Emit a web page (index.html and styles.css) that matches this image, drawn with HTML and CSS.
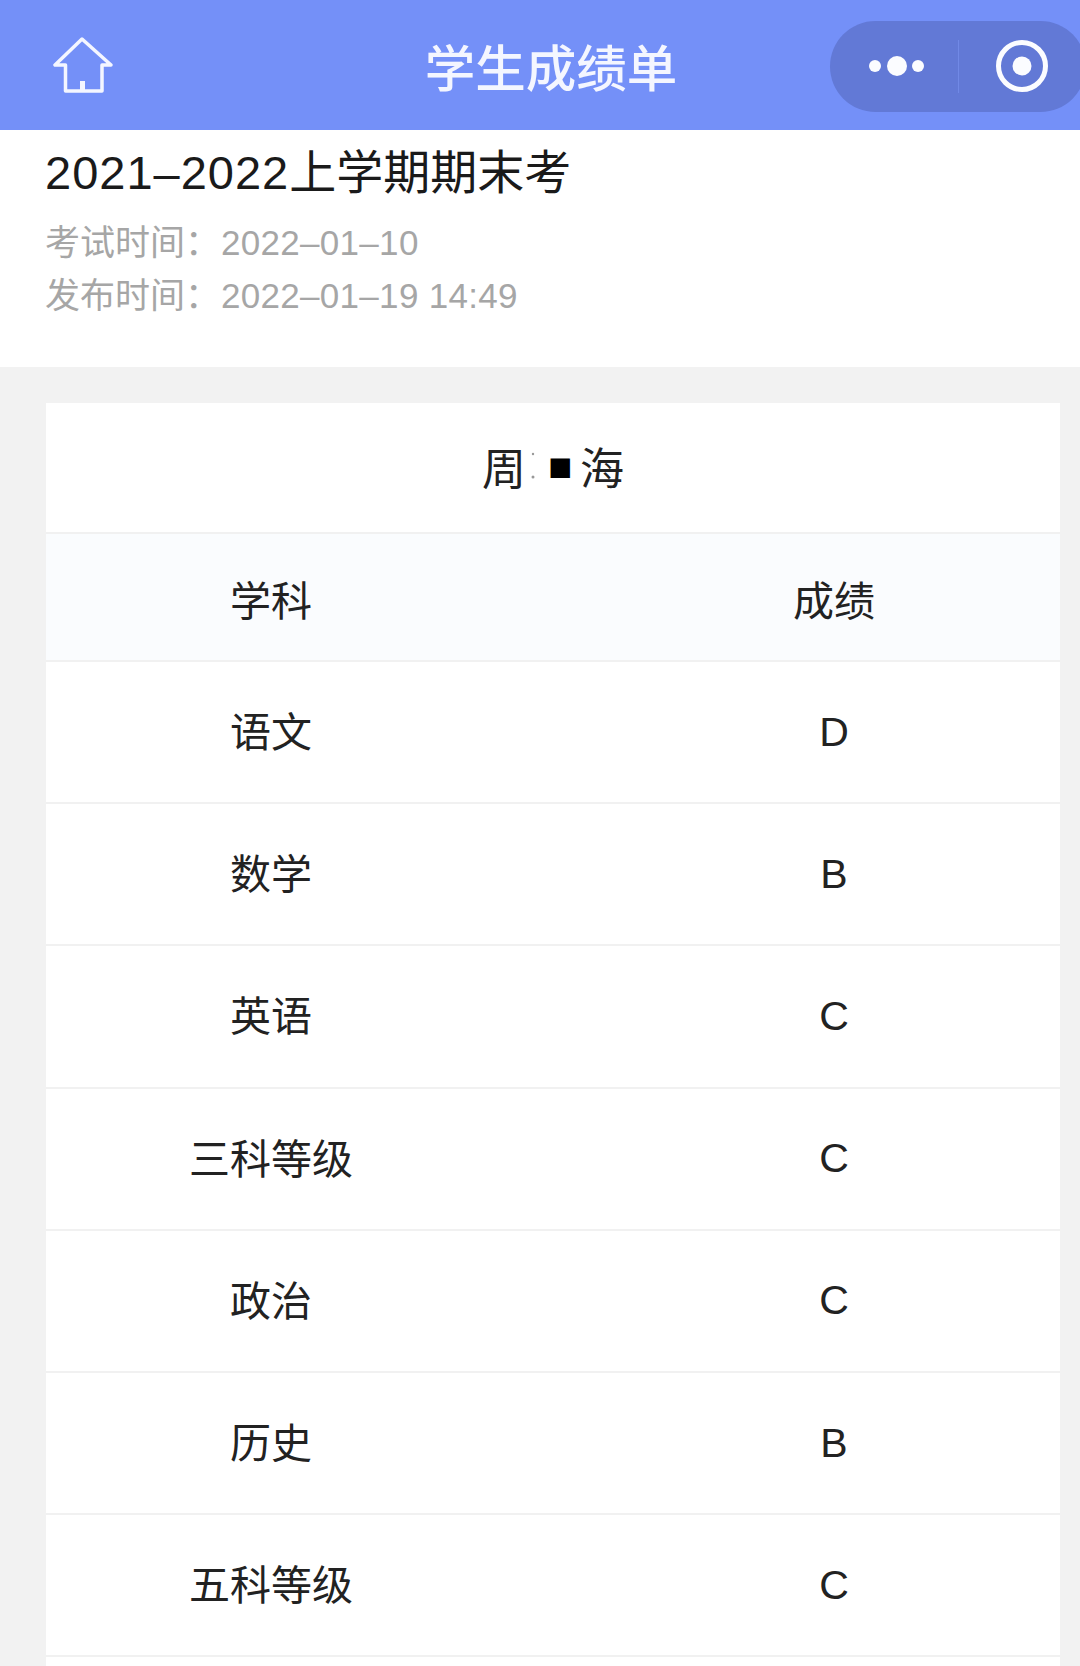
FILE: index.html
```html
<!DOCTYPE html>
<html lang="zh-CN">
<head>
<meta charset="utf-8">
<title>学生成绩单</title>
<link rel="stylesheet" href="styles.css">
</head>
<body>
<header class="nav">
  <svg class="home" viewBox="0 0 60 56" width="60" height="56" aria-hidden="true">
    <path class="home-line" d="M29 2 L2 28 H12.500 V54 H49 V28 H58 Z"/>
    <rect class="home-door" x="27" y="44" width="5" height="10"/>
  </svg>
  <h1 class="nav-title">学生成绩单</h1>
  <div class="capsule">
    <svg class="capsule-dots" viewBox="0 0 56 20" width="56" height="20" aria-hidden="true">
      <circle cx="6" cy="10" r="6"/><circle cx="28" cy="10" r="10"/><circle cx="49" cy="10" r="6"/>
    </svg>
    <span class="capsule-divider"></span>
    <svg class="capsule-record" viewBox="0 0 52 52" width="52" height="52" aria-hidden="true">
      <circle class="record-ring" cx="26" cy="26" r="23.500"/><circle class="record-dot" cx="26" cy="26" r="9.500"/>
    </svg>
  </div>
</header>
<section class="exam">
  <h2 class="exam-title"><span class="exam-year">2021–2022</span>上学期期末考</h2>
  <p class="exam-meta"><span class="meta-label">考试时间：</span><span class="meta-value">2022–01–10</span></p>
  <p class="exam-meta"><span class="meta-label">发布时间：</span><span class="meta-value">2022–01–19 14:49</span></p>
</section>
<main class="card">
  <div class="student">
    <span class="student-char">周</span>
    <svg class="mask-dots" viewBox="0 0 14 30" width="14" height="30" aria-hidden="true">
      <circle cx="7" cy="3" r="1.200"/><circle cx="7" cy="26" r="1.500"/>
    </svg>
    <span class="mask">■</span>
    <span class="student-char">海</span>
  </div>
  <div class="row row-head"><span>学科</span><span>成绩</span></div>
  <div class="row"><span>语文</span><span>D</span></div>
  <div class="row"><span>数学</span><span>B</span></div>
  <div class="row"><span>英语</span><span>C</span></div>
  <div class="row"><span>三科等级</span><span>C</span></div>
  <div class="row"><span>政治</span><span>C</span></div>
  <div class="row"><span>历史</span><span>B</span></div>
  <div class="row"><span>五科等级</span><span>C</span></div>
</main>
</body>
</html>
```
FILE: styles.css
```css
* { box-sizing: border-box; }
html, body { margin: 0; height: 1666px; overflow: hidden; }
body {
  background: #f2f2f2;
  color: #222;
  font-family: "Liberation Sans", "Noto Sans CJK SC", sans-serif;
}
.nav {
  height: 130px;
  padding-left: 22px;
  background: #7490f8;
  display: grid;
  grid-template-columns: 1fr auto 1fr;
  align-items: center;
  color: #fff;
}
.home { margin-left: 31px; }
.home-line { fill: none; stroke: #f4f6ff; stroke-width: 3.5; stroke-linejoin: round; }
.home-door { fill: #f4f6ff; }
.nav-title { margin: 10px 0 0; font-size: 50.500px; font-weight: 500; line-height: 60px; color: #f4f6ff; }
.capsule {
  justify-self: end;
  margin-right: -6px;
  margin-top: 2px;
  width: 256px;
  height: 91px;
  border-radius: 46px;
  background: #6279d6;
  display: flex;
  align-items: center;
  padding-left: 39px;
}
.capsule-dots { fill: #fbfcff; }
.capsule-divider { width: 1px; height: 53px; margin: 0 37px 0 33px; background: #7189e6; }
.record-ring { fill: none; stroke: #fbfcff; stroke-width: 5; }
.record-dot { fill: #fbfcff; }
.exam { height: 237px; padding: 13px 45px 0; background: #fff; }
.exam-title { margin: 0 0 13px; font-size: 47px; font-weight: 400; line-height: 60px; color: #1a1a1a; }
.exam-year { letter-spacing: 1px; }
.exam-meta { margin: 0; font-size: 35px; line-height: 53px; color: #a6a6a6; }
.meta-label { display: inline-block; width: 176px; }
.meta-value { letter-spacing: 0.300px; }
.card { width: 1014px; height: 1263px; overflow: hidden; margin: 36px 0 0 46px; background: #fff; }
.student {
  height: 131px;
  padding-bottom: 4px;
  display: flex;
  align-items: center;
  justify-content: center;
  font-size: 44px;
  border-bottom: 2px solid #f1f1f1;
}
.mask-dots { fill: #999; }
.mask { width: 40px; font-size: 40px; line-height: 1; text-align: center; color: #000; }
.row {
  height: 142.200px;
  display: grid;
  grid-template-columns: 450px 452px;
  justify-content: space-between;
  align-items: center;
  text-align: center;
  font-size: 41px;
  border-bottom: 2px solid #f1f1f1;
}
.row > :first-child { margin-bottom: 6px; }
.row-head { height: 128px; padding-top: 2px; background: #fafcfe; }
.row-head > :first-child { margin-bottom: 0; }
```
